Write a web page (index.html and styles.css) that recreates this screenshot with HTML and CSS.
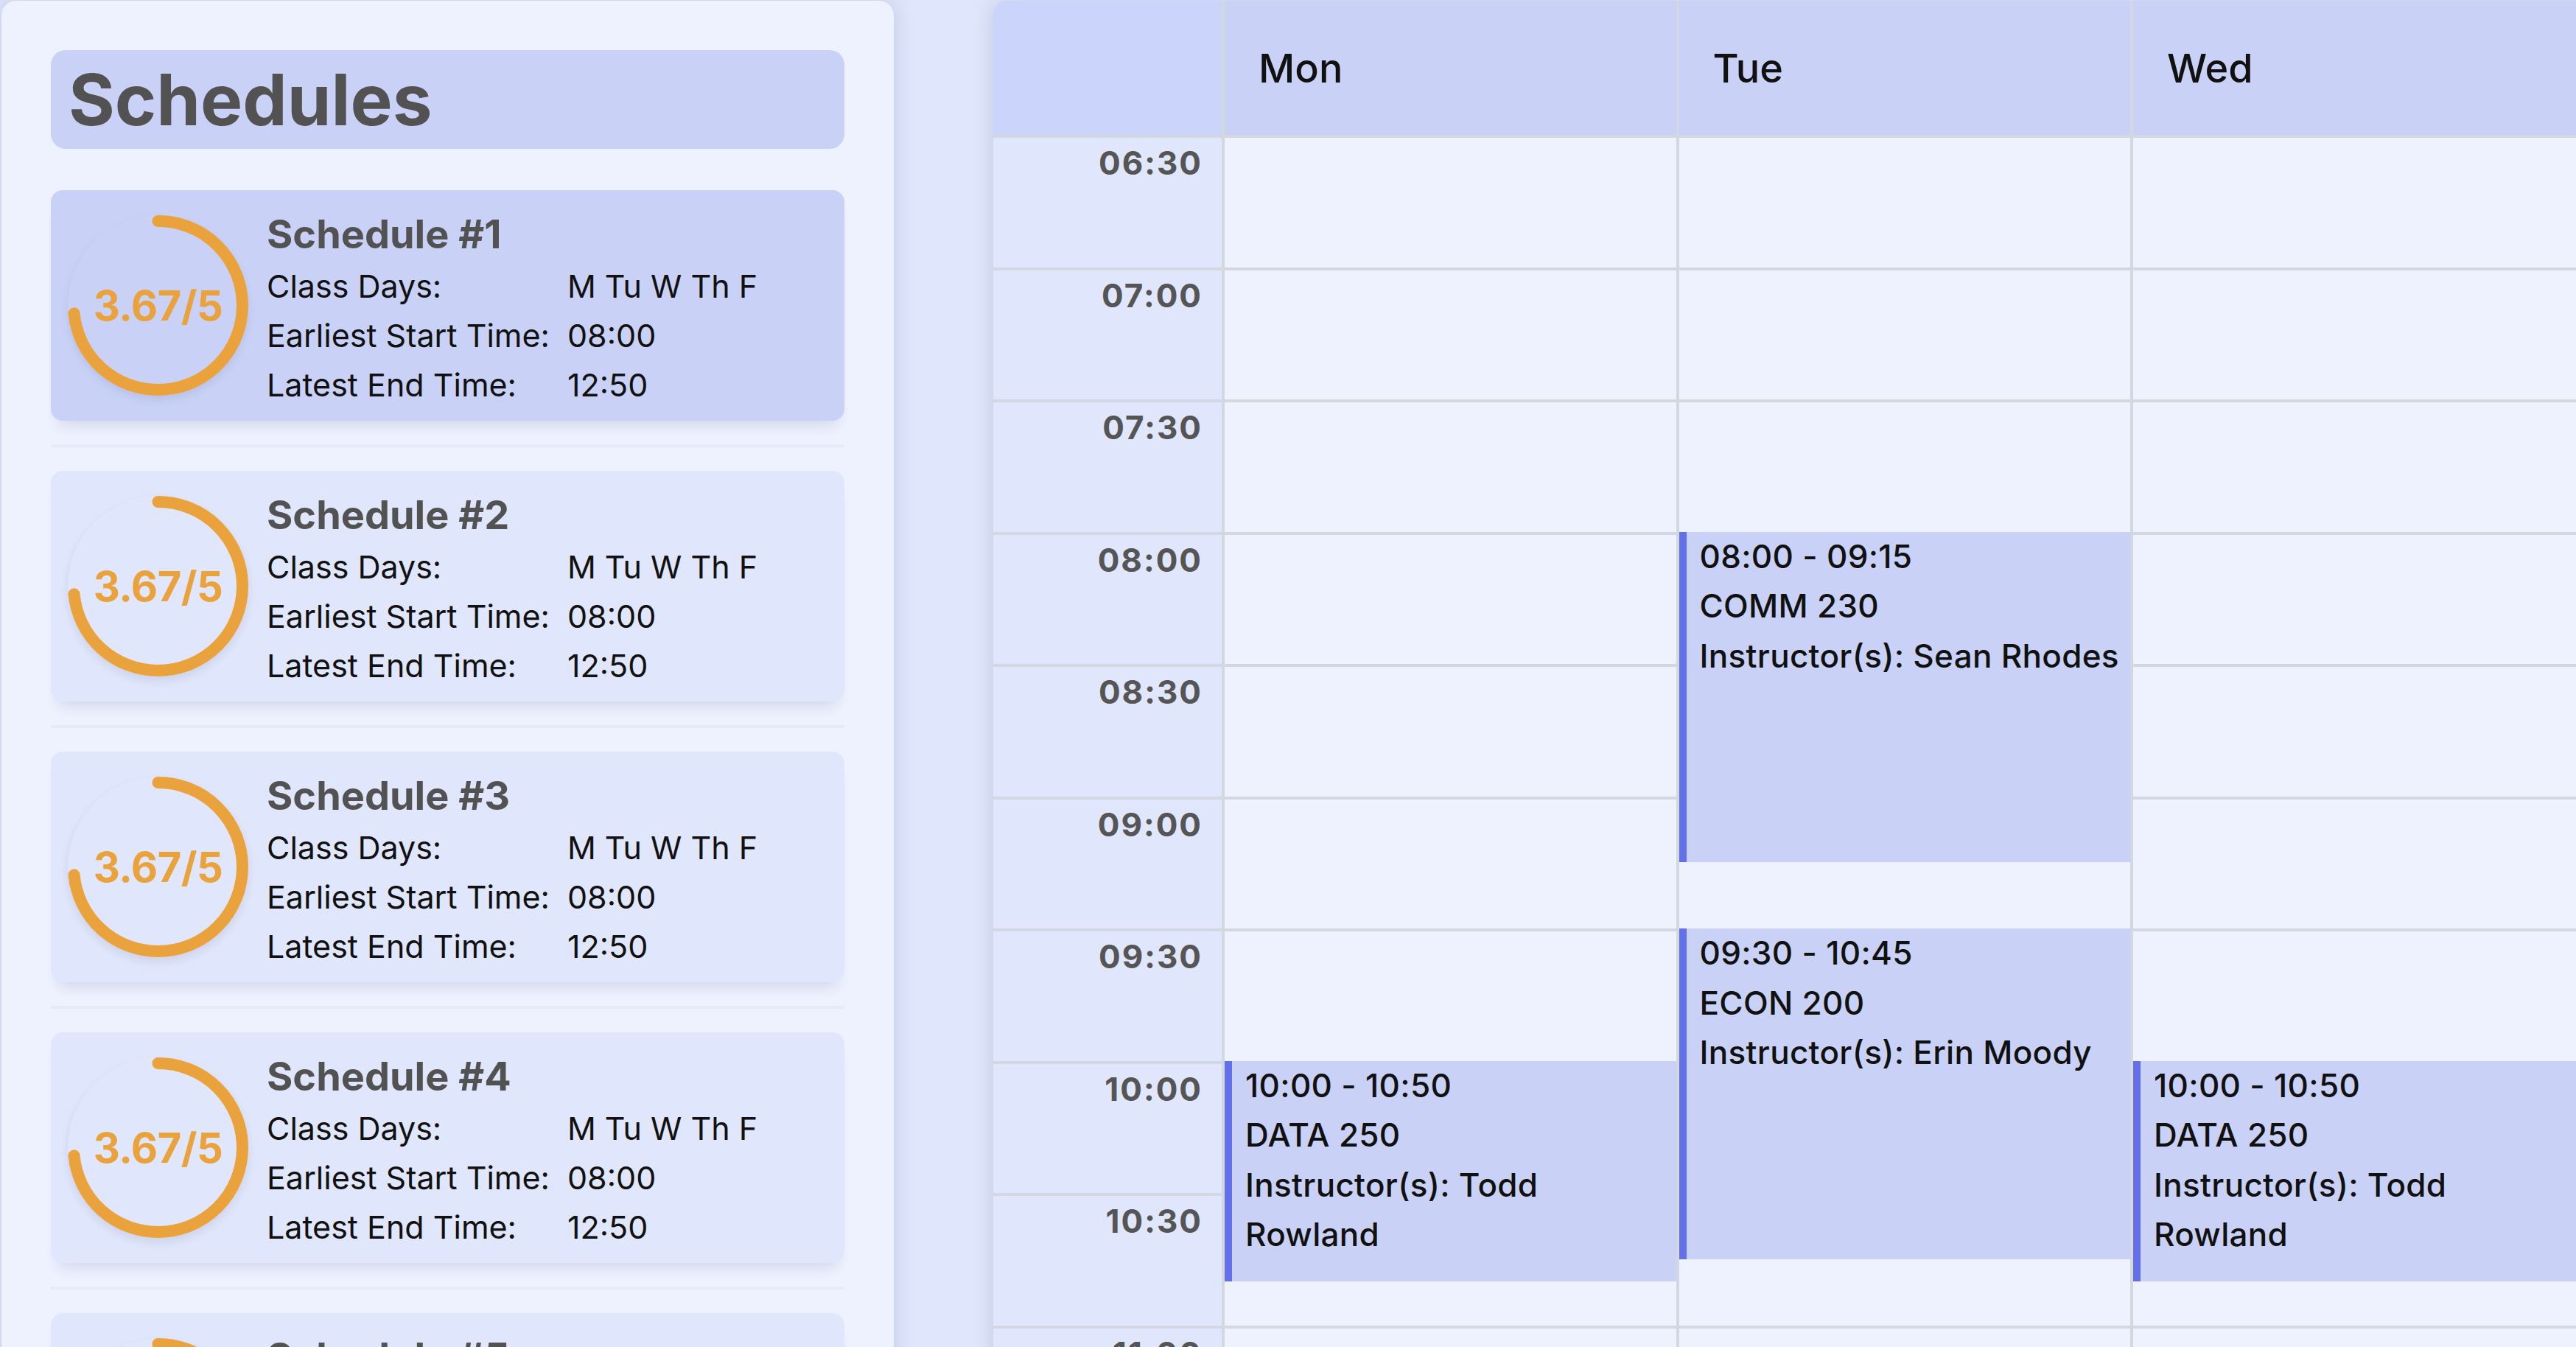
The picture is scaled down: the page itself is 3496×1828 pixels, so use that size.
FILE: index.html
```html
<!DOCTYPE html>
<html lang="en">
<head>
<meta charset="utf-8">
<title>Schedules</title>
<link rel="stylesheet" href="styles.css">
</head>
<body>
<div class="app">
  <aside class="sidebar">
    <h1 class="sidebar-title">Schedules</h1>
    <div class="list">
      <div class="card active">
        <div class="score">
          <svg viewBox="0 0 245 245"><circle class="arc" cx="122.5" cy="122.5" r="114.5" stroke-dasharray="528 720" transform="rotate(-90 122.5 122.5)"/></svg>
          <span class="score-text">3.67/5</span>
        </div>
        <div class="info">
          <h2>Schedule #1</h2>
          <div class="rows">
            <span>Class Days:</span><span>M Tu W Th F</span>
            <span>Earliest Start Time:</span><span>08:00</span>
            <span>Latest End Time:</span><span>12:50</span>
          </div>
        </div>
      </div>
      <hr class="sep">
      <div class="card">
        <div class="score">
          <svg viewBox="0 0 245 245"><circle class="arc" cx="122.5" cy="122.5" r="114.5" stroke-dasharray="528 720" transform="rotate(-90 122.5 122.5)"/></svg>
          <span class="score-text">3.67/5</span>
        </div>
        <div class="info">
          <h2>Schedule #2</h2>
          <div class="rows">
            <span>Class Days:</span><span>M Tu W Th F</span>
            <span>Earliest Start Time:</span><span>08:00</span>
            <span>Latest End Time:</span><span>12:50</span>
          </div>
        </div>
      </div>
      <hr class="sep">
      <div class="card">
        <div class="score">
          <svg viewBox="0 0 245 245"><circle class="arc" cx="122.5" cy="122.5" r="114.5" stroke-dasharray="528 720" transform="rotate(-90 122.5 122.5)"/></svg>
          <span class="score-text">3.67/5</span>
        </div>
        <div class="info">
          <h2>Schedule #3</h2>
          <div class="rows">
            <span>Class Days:</span><span>M Tu W Th F</span>
            <span>Earliest Start Time:</span><span>08:00</span>
            <span>Latest End Time:</span><span>12:50</span>
          </div>
        </div>
      </div>
      <hr class="sep">
      <div class="card">
        <div class="score">
          <svg viewBox="0 0 245 245"><circle class="arc" cx="122.5" cy="122.5" r="114.5" stroke-dasharray="528 720" transform="rotate(-90 122.5 122.5)"/></svg>
          <span class="score-text">3.67/5</span>
        </div>
        <div class="info">
          <h2>Schedule #4</h2>
          <div class="rows">
            <span>Class Days:</span><span>M Tu W Th F</span>
            <span>Earliest Start Time:</span><span>08:00</span>
            <span>Latest End Time:</span><span>12:50</span>
          </div>
        </div>
      </div>
      <hr class="sep">
      <div class="card">
        <div class="score">
          <svg viewBox="0 0 245 245"><circle class="arc" cx="122.5" cy="122.5" r="114.5" stroke-dasharray="528 720" transform="rotate(-90 122.5 122.5)"/></svg>
          <span class="score-text">3.67/5</span>
        </div>
        <div class="info">
          <h2>Schedule #5</h2>
          <div class="rows">
            <span>Class Days:</span><span>M Tu W Th F</span>
            <span>Earliest Start Time:</span><span>08:00</span>
            <span>Latest End Time:</span><span>12:50</span>
          </div>
        </div>
      </div>
    </div>
  </aside>

  <main class="calendar">
    <div class="col time-col">
      <div class="head"></div>
      <div class="cell">06:30</div>
      <div class="cell">07:00</div>
      <div class="cell">07:30</div>
      <div class="cell">08:00</div>
      <div class="cell">08:30</div>
      <div class="cell">09:00</div>
      <div class="cell">09:30</div>
      <div class="cell">10:00</div>
      <div class="cell">10:30</div>
      <div class="cell">11:00</div>
      <div class="cell">11:30</div>
    </div>

    <div class="col day">
      <div class="head">Mon</div>
      <div class="cell"></div><div class="cell"></div><div class="cell"></div><div class="cell"></div>
      <div class="cell"></div><div class="cell"></div><div class="cell"></div><div class="cell"></div>
      <div class="cell"></div><div class="cell"></div><div class="cell"></div>
      <div class="event" style="top:1438.5px;height:299.2px">
        <div>10:00 - 10:50</div><div>DATA 250</div><div>Instructor(s): Todd Rowland</div>
      </div>
    </div>

    <div class="col day">
      <div class="head">Tue</div>
      <div class="cell"></div><div class="cell"></div><div class="cell"></div><div class="cell"></div>
      <div class="cell"></div><div class="cell"></div><div class="cell"></div><div class="cell"></div>
      <div class="cell"></div><div class="cell"></div><div class="cell"></div>
      <div class="event" style="top:720.5px;height:448.75px">
        <div>08:00 - 09:15</div><div>COMM 230</div><div>Instructor(s): Sean Rhodes</div>
      </div>
      <div class="event" style="top:1259px;height:448.75px">
        <div>09:30 - 10:45</div><div>ECON 200</div><div>Instructor(s): Erin Moody</div>
      </div>
    </div>

    <div class="col day">
      <div class="head">Wed</div>
      <div class="cell"></div><div class="cell"></div><div class="cell"></div><div class="cell"></div>
      <div class="cell"></div><div class="cell"></div><div class="cell"></div><div class="cell"></div>
      <div class="cell"></div><div class="cell"></div><div class="cell"></div>
      <div class="event" style="top:1438.5px;height:299.2px">
        <div>10:00 - 10:50</div><div>DATA 250</div><div>Instructor(s): Todd Rowland</div>
      </div>
    </div>

    <div class="col day">
      <div class="head">Thu</div>
      <div class="cell"></div><div class="cell"></div><div class="cell"></div><div class="cell"></div>
      <div class="cell"></div><div class="cell"></div><div class="cell"></div><div class="cell"></div>
      <div class="cell"></div><div class="cell"></div><div class="cell"></div>
      <div class="event" style="top:720.5px;height:448.75px">
        <div>08:00 - 09:15</div><div>COMM 230</div><div>Instructor(s): Sean Rhodes</div>
      </div>
      <div class="event" style="top:1259px;height:448.75px">
        <div>09:30 - 10:45</div><div>ECON 200</div><div>Instructor(s): Erin Moody</div>
      </div>
    </div>

    <div class="col day">
      <div class="head">Fri</div>
      <div class="cell"></div><div class="cell"></div><div class="cell"></div><div class="cell"></div>
      <div class="cell"></div><div class="cell"></div><div class="cell"></div><div class="cell"></div>
      <div class="cell"></div><div class="cell"></div><div class="cell"></div>
      <div class="event" style="top:1438.5px;height:299.2px">
        <div>10:00 - 10:50</div><div>DATA 250</div><div>Instructor(s): Todd Rowland</div>
      </div>
    </div>
  </main>
</div>
</body>
</html>
```
FILE: styles.css
```css
* { box-sizing: border-box; }

html, body {
  margin: 0;
  height: 100%;
  overflow: hidden;
}

body {
  background: #e0e6fb;
  font-family: Inter, "Noto Sans", "Liberation Sans", sans-serif;
  color: #111;
}

.app {
  display: flex;
  align-items: flex-start;
  gap: 135px;
  padding: 1px 0 0 2px;
  height: 100vh;
}

/* ---------- sidebar ---------- */
.sidebar {
  flex: 0 0 1211px;
  height: calc(100vh + 80px);
  background: #eef2fe;
  border-radius: 20px;
  box-shadow: 0 0 28px rgba(50, 60, 120, 0.18);
  padding: 67px 67px 0 67px;
  overflow: hidden;
}

.sidebar-title {
  margin: 0 0 56px;
  height: 134px;
  line-height: 134px;
  background: #c9d2f6;
  border-radius: 20px;
  padding-left: 24px;
  font-size: 96px;
  font-weight: 700;
  color: #525252;
}

.card {
  height: 313px;
  display: flex;
  align-items: center;
  gap: 25px;
  padding: 0 23px;
  background: #e0e6fb;
  border-radius: 16px;
  box-shadow: 0 16px 18px -10px rgba(40, 50, 110, 0.14);
}

.card.active { background: #c9d2f6; }

.score {
  flex: none;
  width: 245px;
  height: 245px;
  display: grid;
  place-items: center;
  border-radius: 50%;
  box-shadow: 0 6px 12px rgba(40, 50, 110, 0.10);
}

.score > * { grid-area: 1 / 1; }

.score svg {
  display: block;
  width: 245px;
  height: 245px;
}

.arc {
  fill: none;
  stroke: #eaa23c;
  stroke-width: 16;
  stroke-linecap: round;
}

.score-text {
  font-size: 56px;
  font-weight: 700;
  color: #eaa23c;
  letter-spacing: -0.5px;
}

.info {
  align-self: flex-start;
  padding-top: 22px;
}

.info h2 {
  margin: 0;
  font-size: 54px;
  line-height: 75px;
  font-weight: 700;
  color: #525252;
}

.rows {
  display: grid;
  grid-template-columns: auto auto;
  justify-content: start;
  column-gap: 24px;
  font-size: 43px;
  line-height: 67px;
}

.sep {
  height: 4px;
  border: 0;
  margin: 32px 0;
  background: #e6e9f7;
}

/* ---------- calendar ---------- */
.calendar {
  flex: none;
  display: flex;
  gap: 4px;
  background: #d3d7e0;
  border-radius: 20px 0 0 0;
  overflow: hidden;
  box-shadow: 0 0 28px rgba(50, 60, 120, 0.18);
}

.col {
  display: flex;
  flex-direction: column;
  gap: 4px;
}

.time-col { width: 310px; }

.day {
  width: 612.5px;
  position: relative;
}

.head {
  flex: none;
  height: 182px;
  display: flex;
  align-items: center;
  padding-left: 46px;
  background: #c9d2f6;
  font-size: 54px;
  font-weight: 500;
}

.time-col .head { background: #cbd5fb; }

.cell {
  flex: none;
  height: 175.5px;
  background: #eef2fe;
}

.time-col .cell {
  background: #e0e6fb;
  text-align: right;
  padding: 8px 26px 0 0;
  font-size: 44px;
  line-height: 1.2;
  font-weight: 700;
  color: #555;
  letter-spacing: 2px;
}

.event {
  position: absolute;
  left: 0;
  right: 0;
  z-index: 1;
  background: #c9d2f6;
  border-left: 10px solid #6470ea;
  padding: 0 10px 0 18px;
  font-size: 44px;
  line-height: 67.5px;
  font-weight: 500;
  letter-spacing: 0.3px;
}
```
